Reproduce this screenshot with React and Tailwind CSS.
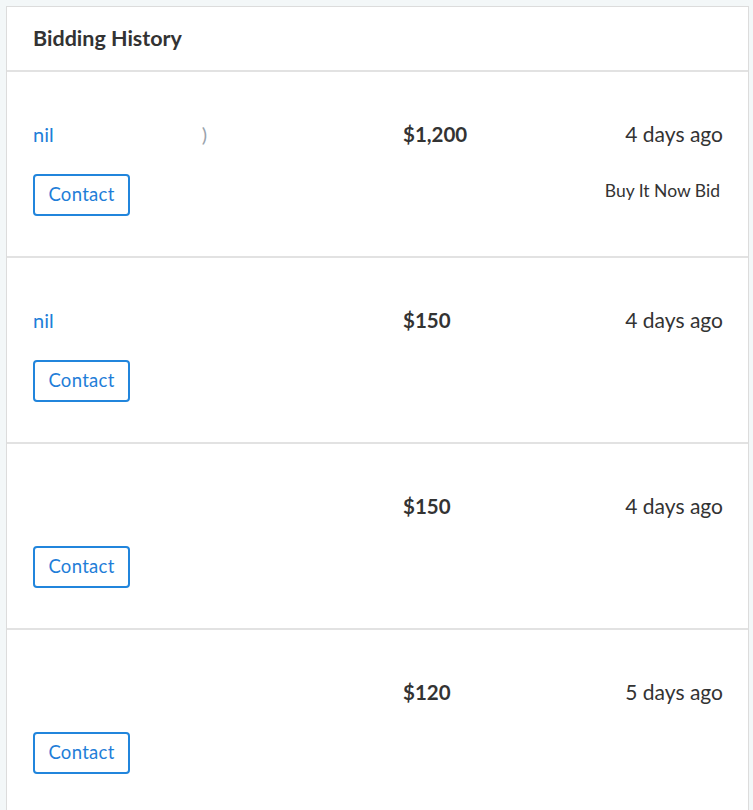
import React from "react";

const rows = [
  { name: "nil", extra: true, price: "$1,200", time: "4 days ago", note: "Buy It Now Bid" },
  { name: "nil", price: "$150", time: "4 days ago" },
  { name: "", price: "$150", time: "4 days ago" },
  { name: "", price: "$120", time: "5 days ago" },
];

export default function App() {
  return (
    <div className="min-h-[810px] bg-[#f3f7f8] pl-[6px] pr-[4px] pt-[6px]" style={{ fontFamily: '"Source Sans Pro", "Lato", "Noto Sans", sans-serif' }}>
      <div className="border border-[#dcdcdc] bg-white text-[#333]">
        <div className="flex h-[65px] items-center border-b-2 border-[#e2e2e2] pl-[26px]">
          <h2 className="text-[21.5px] font-bold leading-none text-[#333]">Bidding History</h2>
        </div>
        {rows.map((r, i) => (
          <div key={i} className={`flex pl-[26px] pr-[25px] pt-[44px] pb-[40px] ${i < rows.length - 1 ? "border-b-2 border-[#e2e2e2]" : ""}`}>
            <div className="w-[370px] shrink-0">
              <div className="flex h-[36px] items-center text-[20px] text-[#1f7ed8]">
                {r.name}
                {r.extra && <span className="ml-[148px] text-[#9aa3ad]">)</span>}
              </div>
              <button className="mt-[22px] flex h-[42px] w-[97px] items-center justify-center rounded-[4px] border-2 border-[#2185dc] text-[18.5px] tracking-[0.3px] text-[#1f7ed8]">
                Contact
              </button>
            </div>
            <div className="flex h-[36px] flex-1 items-center text-[20.5px] font-bold text-[#333]">{r.price}</div>
            <div className="flex flex-col items-end">
              <div className="flex h-[36px] items-center text-[21px] text-[#333]">{r.time}</div>
              {r.note && <div className="mt-[28px] pr-[3px] text-[17.5px] leading-[22px] text-[#333]">{r.note}</div>}
            </div>
          </div>
        ))}
      </div>
    </div>
  );
}
